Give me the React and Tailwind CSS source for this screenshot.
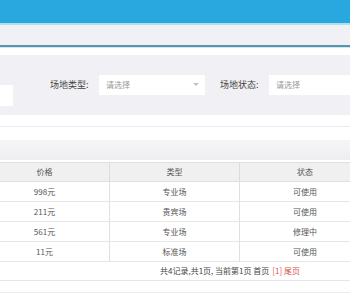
import React from 'react';

const rows = [
    { price: '998元', type: '专业场', status: '可使用' },
    { price: '211元', type: '贵宾场', status: '可使用' },
    { price: '561元', type: '专业场', status: '修理中' },
    { price: '11元', type: '标准场', status: '可使用' },
];

const App = () => {
    return (
        <div className="w-[350px] h-[300px] overflow-hidden bg-white text-[#555]" style={{ fontFamily: '"Noto Sans CJK SC", "Noto Sans", sans-serif' }}>
            {/* Top bar */}
            <div className="h-[25px] bg-[#29a8e0] border-b-2 border-[#aee0f0]" />
            {/* Tabs strip */}
            <div className="h-[22px] bg-[#f1f0f4] border-b-2 border-[#5f93a8]" />
            <div className="h-[8px] bg-white border-t border-[#c8eaf4]" />

            {/* Search form */}
            <div className="h-[60px] bg-[#f1f0f4] flex items-start overflow-hidden">
                <div className="w-[13px] h-[21px] mt-[30px] bg-white shrink-0" />
                <div className="ml-[37px] mt-[20px] flex items-center h-[20px] shrink-0">
                    <span className="text-[9px] w-[49px] shrink-0 text-[#444]">场地类型:</span>
                    <div className="w-[106px] h-[20px] bg-white flex items-center justify-between pl-[7px] pr-[6px] shrink-0">
                        <span className="text-[8px] text-[#999]">请选择</span>
                        <svg width="6" height="4" viewBox="0 0 6 4"><path d="M0 0 L6 0 L3 3 Z" fill="#c0c0c0" /></svg>
                    </div>
                    <span className="text-[9px] w-[49px] ml-[15px] shrink-0 text-[#444]">场地状态:</span>
                    <div className="w-[100px] h-[20px] bg-white flex items-center pl-[7px] shrink-0">
                        <span className="text-[8px] text-[#999]">请选择</span>
                    </div>
                </div>
            </div>

            {/* Toolbar area */}
            <div className="h-[47px] bg-white flex flex-col">
                <div className="h-[12px] border-b border-[#ebebef]" />
                <div className="h-[13px]" />
                <div className="h-[20px] bg-gradient-to-b from-[#f6f6f8] to-[#eeeef1]" />
            </div>

            {/* Table */}
            <div className="ml-[-20px] w-[390px]">
                <div className="grid grid-cols-3 h-[20px] bg-[#f0f0f0] border-y border-[#e0e0e0] text-[8px]">
                    <div className="flex items-center justify-center border-r border-[#dcdcdc]">价格</div>
                    <div className="flex items-center justify-center border-r border-[#dcdcdc]">类型</div>
                    <div className="flex items-center justify-center">状态</div>
                </div>
                {rows.map((r, i) => (
                    <div key={i} className="grid grid-cols-3 h-[20px] border-b border-[#e6e6e6] text-[8px]">
                        <div className="flex items-center justify-center border-r border-[#e0e0e0]">{r.price}</div>
                        <div className="flex items-center justify-center border-r border-[#e0e0e0]">{r.type}</div>
                        <div className="flex items-center justify-center">{r.status}</div>
                    </div>
                ))}
            </div>

            {/* Pagination */}
            <div className="h-[19px] border-b border-[#e6e6e6] flex items-center pl-[160px] text-[8px] text-[#444] whitespace-nowrap">
                共4记录,共1页, 当前第1页 首页 <span className="text-[#d9534f] ml-[3px]">[1] 尾页</span>
            </div>
            <div className="h-[12px] border-b border-[#ececec]" />
        </div>
    );
};

export default App;
